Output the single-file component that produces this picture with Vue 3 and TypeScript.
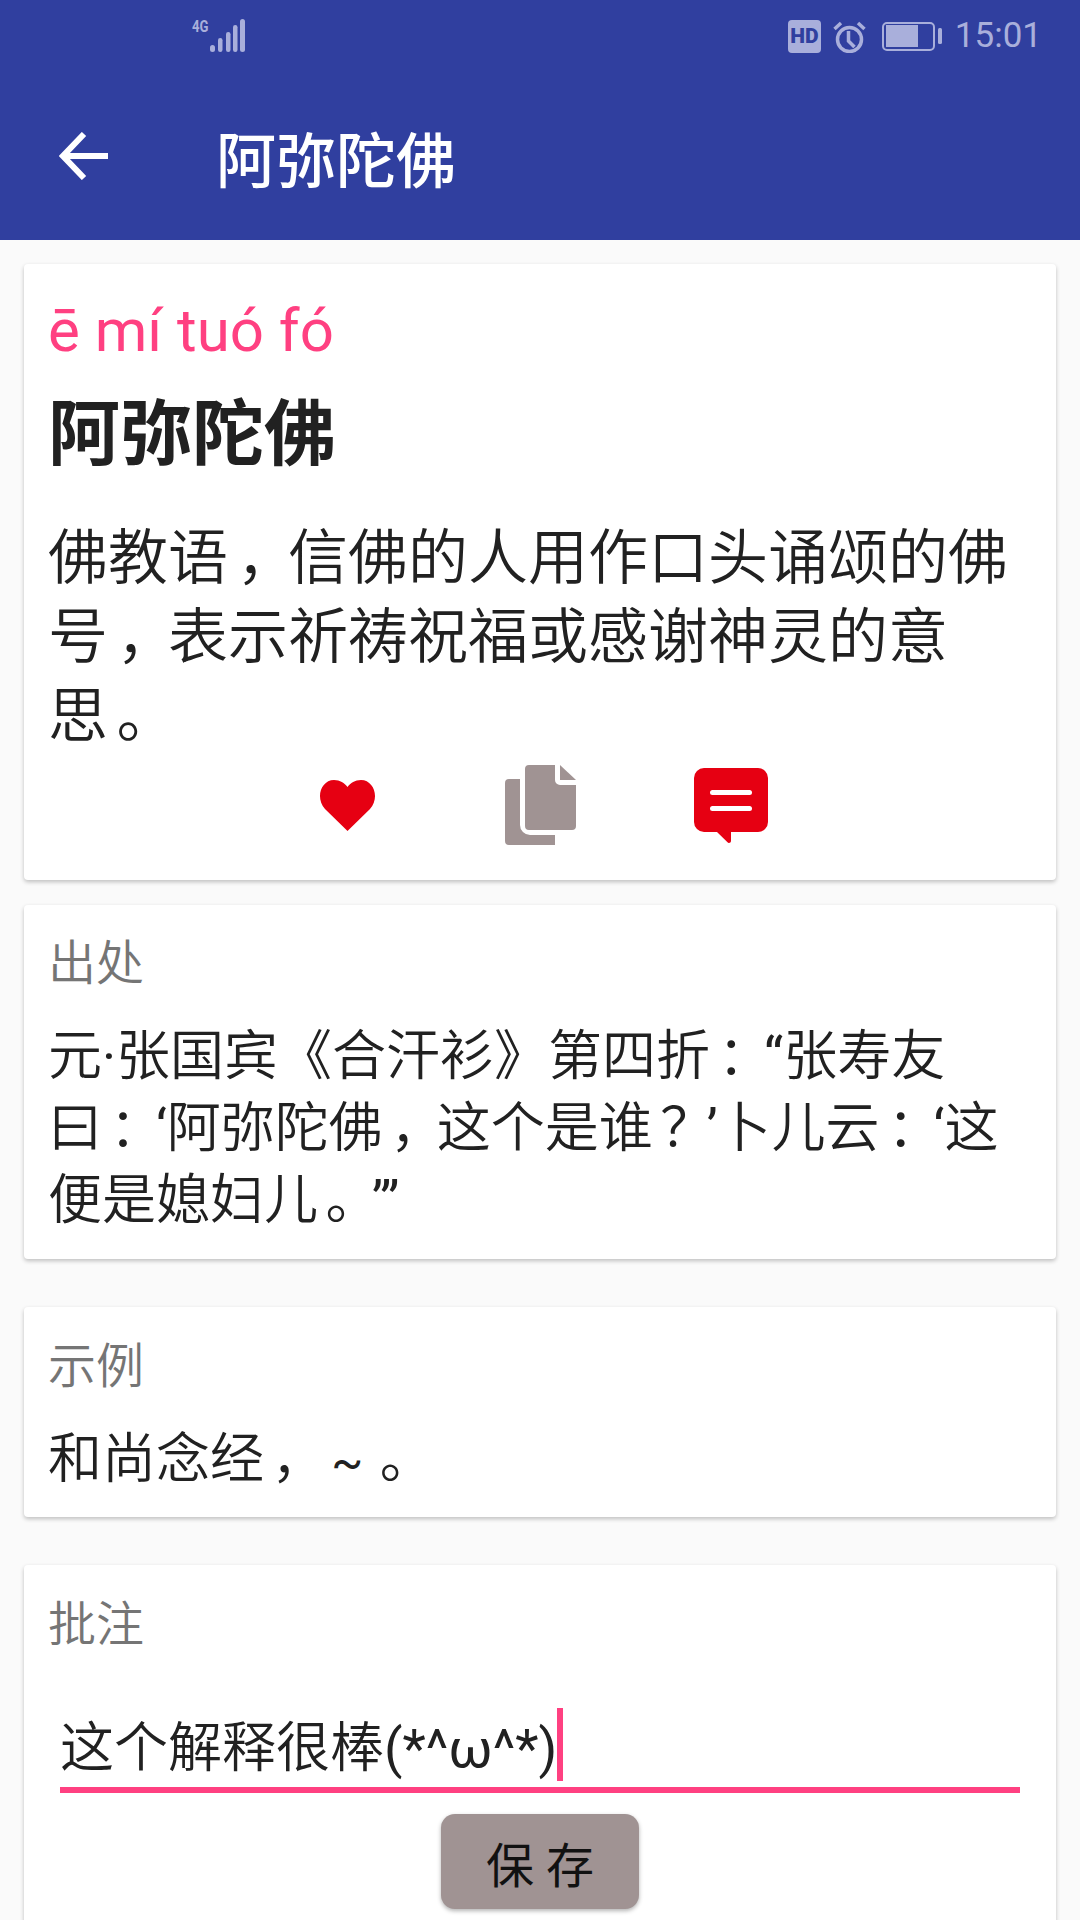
<script setup lang="ts">
interface Seg {
  t: string
  kind: string
}

// the reference's full-width marks sit nearer the middle of their cell than Noto's SC cut,
// and its Latin marks come from Roboto Regular
function marks(text: string): Seg[] {
  return text.split(/([，。：？]|[‘’“”]+|·|~)/).filter(Boolean).map((t) => {
    let kind = ''
    if (/^[，。：？]$/.test(t)) kind = 'punct'
    else if (/^[‘’“”]+$/.test(t)) kind = 'latin'
    else if (t === '·') kind = 'latin'
    else if (t === '~') kind = 'tilde'
    return { t, kind }
  })
}

const meaning = [
  '佛教语，信佛的人用作口头诵颂的佛',
  '号，表示祈祷祝福或感谢神灵的意',
  '思。',
].map(marks)
const source = [
  '元·张国宾《合汗衫》第四折：“张寿友',
  '曰：‘阿弥陀佛，这个是谁？’卜儿云：‘这',
  '便是媳妇儿。’”',
].map(marks)
const example = [marks('和尚念经， ~ 。')]
</script>

<template>
  <div class="page">
    <header class="appbar">
      <div class="statusbar">
        <div class="signal">
          <span class="net">4G</span>
          <svg width="36" height="34" viewBox="0 0 36 34" fill="#a9afdb">
            <rect x="0" y="26" width="5" height="7" rx="2.500" />
            <rect x="8" y="19" width="4.500" height="14" rx="2.200" />
            <rect x="16" y="13" width="4.500" height="20" rx="2.200" />
            <rect x="23" y="6" width="4.500" height="27" rx="2.200" />
            <rect x="30" y="0" width="5" height="33" rx="2.500" />
          </svg>
        </div>
        <div class="status-right">
          <span class="hd">HD</span>
          <svg width="33" height="33" viewBox="0 0 33 33" fill="none" stroke="#a9afdb" stroke-width="3.500">
            <circle cx="16.500" cy="19.500" r="12" />
            <path d="M15.500 11v10l6 6" />
            <path d="M1.500 9l6.500-6M31.500 9L25 3" />
          </svg>
          <svg class="battery" width="60" height="29" viewBox="0 0 60 29" fill="none">
            <rect x="1" y="1" width="51" height="27" rx="4" stroke="#a9afdb" stroke-width="2" />
            <rect x="4" y="3" width="32" height="22" fill="#a9afdb" />
            <rect x="56" y="6" width="4" height="16" rx="1.500" fill="#a9afdb" />
          </svg>
          <span class="clock">15:01</span>
        </div>
      </div>
      <div class="toolbar">
        <svg class="back" width="50" height="48" viewBox="0 0 50 48" fill="none" stroke="#fff" stroke-width="6">
          <path d="M49 24H5" />
          <path d="M25 2L4 24l21 22" />
        </svg>
        <h1 class="title">阿弥陀佛</h1>
      </div>
    </header>

    <main class="content">
      <section class="card first">
        <p class="pinyin">ē mí tuó fó</p>
        <h2 class="word">阿弥陀佛</h2>
        <p class="meaning">
          <span v-for="(line, n) in meaning" :key="n" class="line">
            <span v-for="(s, i) in line" :key="i" :class="s.kind">{{ s.t }}</span>
          </span>
        </p>
        <div class="actions">
          <svg class="heart" width="57" height="51" viewBox="0 0 57 51">
            <path fill="#e60012" d="M28.500 51 L6 29 C-4 18 2 0 15 0 C21 0 25.500 3 28.500 7 C31.500 3 36 0 42 0 C55 0 61 18 51 29 Z" />
          </svg>
          <svg width="71" height="80" viewBox="0 0 71 80" fill="#a09393">
            <path d="M4 14h11v46a10 10 0 0 0 10 10h25v10H4a4 4 0 0 1-4-4V18a4 4 0 0 1 4-4z" />
            <path d="M24 0h26v15a5 5 0 0 0 5 5h16v41a4 4 0 0 1-4 4H24a4 4 0 0 1-4-4V4a4 4 0 0 1 4-4z" />
            <path d="M55 0l16 15H55z" />
          </svg>
          <svg width="74" height="75" viewBox="0 0 74 75">
            <path fill="#e60012" d="M10 0h54a10 10 0 0 1 10 10v44a10 10 0 0 1-10 10H37v9a2 2 0 0 1-3.500 1.300L23 64H10A10 10 0 0 1 0 54V10A10 10 0 0 1 10 0z" />
            <rect x="16" y="22" width="42" height="5" rx="2.500" fill="#fff" />
            <rect x="16" y="38" width="42" height="5" rx="2.500" fill="#fff" />
          </svg>
        </div>
      </section>

      <section class="card source">
        <h3 class="label">出处</h3>
        <p class="text">
          <span v-for="(line, n) in source" :key="n" class="line">
            <span v-for="(s, i) in line" :key="i" :class="s.kind">{{ s.t }}</span>
          </span>
        </p>
      </section>

      <section class="card example">
        <h3 class="label">示例</h3>
        <p class="text">
          <span v-for="(line, n) in example" :key="n" class="line">
            <span v-for="(s, i) in line" :key="i" :class="s.kind">{{ s.t }}</span>
          </span>
        </p>
      </section>

      <section class="card note">
        <h3 class="label">批注</h3>
        <div class="field">
          <span class="field-text">这个解释很棒<span class="latin">(*^ω^*)</span></span><span class="caret"></span>
        </div>
        <div class="save-row">
          <button class="save" type="button">保 存</button>
        </div>
      </section>
    </main>
  </div>
</template>

<style>
html, body {
  margin: 0;
  background: #fafafa;
}
</style>

<style scoped>
.page {
  width: 1080px;
  height: 1920px;
  overflow: hidden;
  background: #fafafa;
  font-family: Roboto, "Noto Sans CJK SC", sans-serif;
  font-weight: 350;
  color: #212121;
}
p, h1, h2, h3 {
  margin: 0;
}

.appbar {
  height: 240px;
  background: #303f9f;
}
.statusbar {
  height: 72px;
  display: flex;
  justify-content: space-between;
  align-items: center;
  padding: 0 38px 0 192px;
  color: #a9afdb;
  font-weight: 400;
}
.signal {
  display: flex;
  align-items: flex-start;
}
.net {
  width: 18px;
  font-size: 16px;
  font-weight: 700;
  line-height: 16px;
  transform: scaleX(0.82);
  transform-origin: left;
}
.status-right {
  display: flex;
  align-items: center;
}
.hd {
  width: 33px;
  height: 33px;
  border-radius: 4px;
  background: #a9afdb;
  color: #303f9f;
  font-size: 21px;
  font-weight: 900;
  line-height: 33px;
  text-align: center;
  margin-right: 12px;
}
.battery {
  margin: 0 13px 0 16px;
}
.clock {
  font-size: 35px;
  line-height: 40px;
}
.toolbar {
  height: 168px;
  display: flex;
  align-items: center;
  padding-left: 59px;
  box-sizing: border-box;
}
.back {
  flex: none;
}
.title {
  margin-left: 107px;
  font-size: 60px;
  font-weight: 500;
  color: #fff;
}

.content {
  padding: 24px 24px 0;
}
.card {
  background: #fff;
  border-radius: 4px;
  box-shadow: 0 2px 4px rgba(0, 0, 0, 0.24);
  box-sizing: border-box;
  padding: 0 24px;
}
.first {
  height: 616px;
  padding-top: 32px;
}
.source {
  height: 354px;
  margin-top: 25px;
  padding-top: 29px;
}
.example {
  height: 210px;
  margin-top: 48px;
  padding-top: 30px;
}
.note {
  height: 400px;
  margin-top: 48px;
  padding-top: 30px;
}

.pinyin {
  font-size: 60px;
  line-height: 70px;
  font-weight: 400;
  color: #ff4081;
}
.word {
  margin-top: 24px;
  font-size: 72px;
  line-height: 90px;
  font-weight: 700;
}
.meaning {
  margin-top: 39px;
  font-size: 60px;
  line-height: 79px;
}
.line {
  display: block;
  white-space: pre;
}
.punct {
  font-feature-settings: "halt";
  padding-left: 0.14em;
  padding-right: 0.36em;
}
.latin {
  font-weight: 400;
}
.tilde {
  font-size: 47px;
  font-weight: 400;
  margin-right: -4px;
}
.actions {
  display: grid;
  grid-template-columns: repeat(3, 191px);
  justify-content: center;
  justify-items: center;
  align-items: center;
  margin-top: 9px;
}
.heart {
  margin-right: 3px;
}
.label {
  font-size: 48px;
  line-height: 60px;
  font-weight: 350;
  color: #757575;
}
.text {
  margin-top: 27px;
  font-size: 54px;
  line-height: 72px;
}
.field {
  margin: 53px 12px 0;
  padding-bottom: 6px;
  border-bottom: 6px solid #ff4081;
  display: flex;
  align-items: flex-start;
}
.field-text {
  margin-top: 8px;
  font-size: 54px;
  line-height: 65px;
}
.caret {
  width: 6px;
  height: 73px;
  background: #ff4081;
}
.save-row {
  display: flex;
  justify-content: center;
  margin-top: 21px;
}
.save {
  width: 198px;
  height: 95px;
  border: 0;
  border-radius: 14px;
  background: #a09393;
  box-shadow: 0 2px 4px rgba(0, 0, 0, 0.3);
  color: #111;
  font-family: inherit;
  font-size: 48px;
  font-weight: 400;
  padding: 0;
}
</style>
